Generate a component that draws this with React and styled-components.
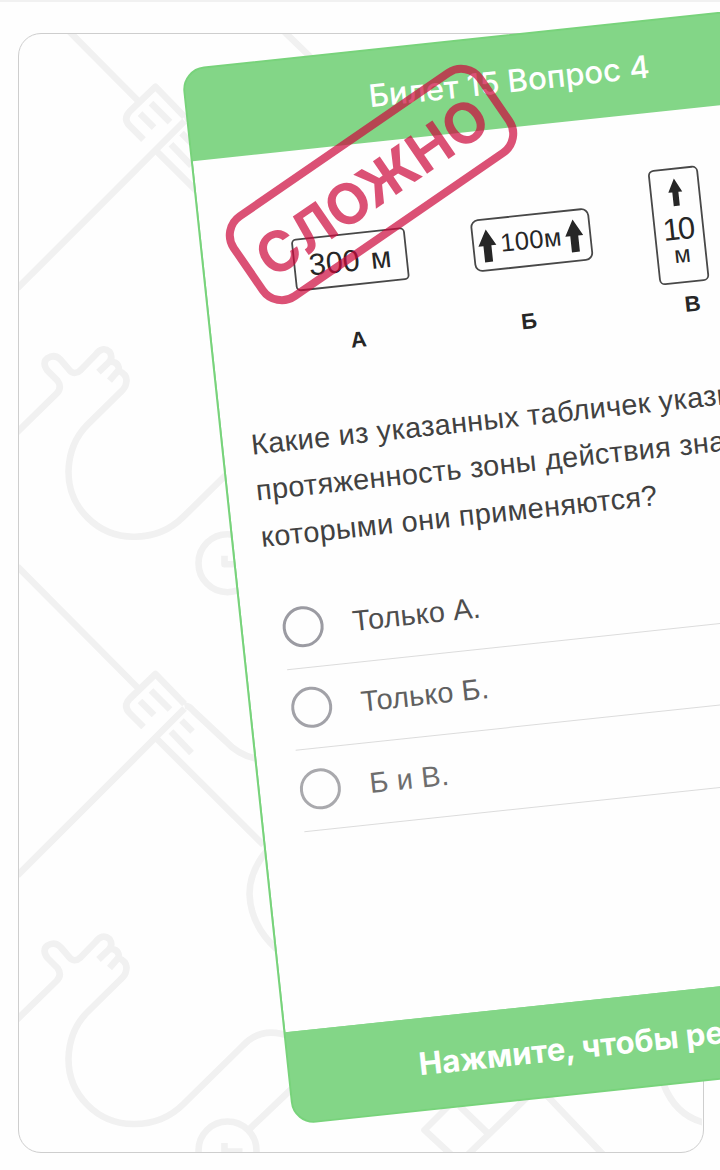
import React from "react";
import styled, { createGlobalStyle } from "styled-components";

const GlobalStyle = createGlobalStyle`
  * { box-sizing: border-box; }
  html, body { margin: 0; padding: 0; background: #fff; overflow: hidden; }
`;

const Page = styled.main`
  position: relative;
  width: 720px;
  height: 1170px;
  padding: 30.5px 16px 17px 18px;
  overflow: hidden;
  background: #fefefe;
  border-top: 2px solid #f1f1f1;
  font-family: "Liberation Sans", Arial, sans-serif;
`;

const Panel = styled.section`
  width: 686px;
  height: 1120.5px;
  overflow: hidden;
  border: 1.5px solid #cecece;
  border-radius: 23px;
`;

const Pattern = styled.svg`
  display: block;
  width: 683px;
  height: 1118px;
  fill: none;
  stroke: #f1f1f1;
  stroke-width: 6.6;
  stroke-linejoin: round;
`;

const Card = styled.article`
  position: absolute;
  left: 181px;
  top: 67.2px;
  width: 650px;
  height: 1062px;
  display: flex;
  flex-direction: column;
  overflow: hidden;
  background: #83d687;
  border: 2px solid #78d37b;
  border-radius: 23px;
  transform: rotate(-6.07deg);
  transform-origin: 0 0;
`;

const Band = styled.div`
  flex: none;
  display: flex;
  align-items: center;
  justify-content: center;
  height: 90.8px;
  background: #83d687;
  color: #fff;
  font-family: Inter, sans-serif;
  font-size: 31.2px;
  font-weight: ${(p) => p.$weight};
  white-space: nowrap;
`;

const Body = styled.div`
  flex: 1;
  display: flex;
  flex-direction: column;
  background: #fefefe;
`;

const Signs = styled.svg`
  display: block;
  flex: none;
  width: 645px;
  height: 264.9px;
  font-family: "Liberation Sans", Arial, sans-serif;
  fill: #262626;
`;

const Question = styled.p`
  margin: 0 0 29.4px;
  padding-left: 28px;
  font-size: 28.9px;
  letter-spacing: 0.35px;
  line-height: 46.7px;
  color: #414141;
  white-space: nowrap;
`;

const Options = styled.ul`
  margin: 0;
  padding: 0 0 0 40px;
  list-style: none;
`;

const Option = styled.li`
  display: flex;
  align-items: center;
  gap: 29px;
  height: 81.45px;
  border-bottom: 1px solid #dcdcdc;
  font-size: 28.9px;
  letter-spacing: 0.2px;
  color: ${(p) => p.$color};
`;

const Radio = styled.span`
  width: 41px;
  height: 41px;
  border: 3.6px solid ${(p) => p.$color};
  border-radius: 50%;
`;

const Stamp = styled.div`
  position: absolute;
  left: 218px;
  top: 130.2px;
  width: 307px;
  height: 105px;
  display: flex;
  align-items: center;
  justify-content: center;
  padding: 5px 2px 0 0;
  border: 8px solid #cd083c;
  border-radius: 27px;
  color: #cd083c;
  font-family: Inter, sans-serif;
  font-size: 56px;
  font-weight: 700;
  opacity: 0.7;
  transform: rotate(-34.5deg);
`;

const options = [
  { text: "Только А.", color: "#4e4e4e", ring: "#9b9ba2" },
  { text: "Только Б.", color: "#606060", ring: "#a2a2a8" },
  { text: "Б и В.", color: "#6e6e6e", ring: "#a9a9ad" },
];

function PatternTile({ y = 0 }) {
  return (
    <g transform={`translate(0 ${y})`}>
      <path d="M18 566.500L138.500 688" />
      <path d="M144 727L130 713Q123.500 706 130 699L156 674L185 704" />
      <path d="M140.500 701L154.500 715M151.500 690.500L170.500 709.500" />
      <path d="M18 875.500L185 708.500" />
      <path d="M185 706Q189 705 194 711L226 741Q239 755 256 758.500" />
      <path d="M155.500 737L264 845" />
      <path d="M182 720.500L193 731.500M171.500 731.500L192 753" />
      <path d="M268 850Q250 871 250 894Q251 925 277 949" />
      <path d="M16 1021L57 981Q63 975 58 968L48 958Q42 950 48 945.500Q55 941 61 947L70 957.500Q75 963 81 957.500L96 942Q103 933 110 939Q114 945 109 950L99 959.500" />
      <path d="M111 949Q119 949 119.500 957L110 968M119 958Q129 962 126.500 971Q126 975 121 979.500L88 1012Q70 1030 69 1058A65 65 0 0 0 135 1124Q164 1124 184 1104L243 1046Q262 1025 292 1037" />
      <circle cx="228" cy="1150.500" r="29" />
      <path d="M249 1130L292 1089M225 1143V1151.500H243" />
    </g>
  );
}

function RoadSigns() {
  return (
    <Signs viewBox="2 92.8 645 264.9">
      <g fill="#fefefe" stroke="#484848" strokeWidth="1.8">
        <rect x="92" y="181.500" width="112.500" height="51" rx="4" />
        <rect x="272" y="181.500" width="117.500" height="51" rx="7" />
        <rect x="454" y="151" width="48.500" height="114" rx="5" />
      </g>
      <text x="106.500" y="218.800" fontSize="30.500">300</text>
      <text x="168.500" y="218.800" fontSize="30">м</text>
      <text x="299" y="215.500" fontSize="25.500" textLength="61.500">100м</text>
      <text x="462" y="222" fontSize="31" textLength="32.500">10</text>
      <text x="470.800" y="245.300" fontSize="24">м</text>
      <path d="M286 191.500L295 208H290V224.300H282V208H277Z" />
      <path d="M373.400 190.800L382.400 207.300H377.400V223.500H369.400V207.300H364.400Z" />
      <path d="M478.500 160.800L485.500 174.500H481.600V188.300H475.500V174.500H471.500Z" />
      <g fontSize="22" fontWeight="700" textAnchor="middle">
        <text x="148" y="295">А</text>
        <text x="319.500" y="294.800">Б</text>
        <text x="484" y="294.800">В</text>
      </g>
    </Signs>
  );
}

export default function App() {
  return (
    <>
      <GlobalStyle />
      <Page>
        <Panel>
          <Pattern viewBox="19.5 34 683 1118">
            <PatternTile y={-587.3} />
            <PatternTile />
            <path d="M281 28L314 60" />
            <path d="M452 1155L425 1130L452 1103M460 1106L488 1133M468 1155L530 1095M545 1093L605 1156M664 1084Q676 1116 706 1123" />
          </Pattern>
        </Panel>
        <Card>
          <Band $weight={500}>Билет 15 Вопрос 4</Band>
          <Body>
            <RoadSigns />
            <Question>
              Какие из указанных табличек указывают
              <br />
              протяженность зоны действия знаков, с
              <br />
              которыми они применяются?
            </Question>
            <Options>
              {options.map((o) => (
                <Option key={o.text} $color={o.color}>
                  <Radio $color={o.ring} />
                  {o.text}
                </Option>
              ))}
            </Options>
          </Body>
          <Band $weight={700}>Нажмите, чтобы решить</Band>
        </Card>
        <Stamp>СЛОЖНО</Stamp>
      </Page>
    </>
  );
}
